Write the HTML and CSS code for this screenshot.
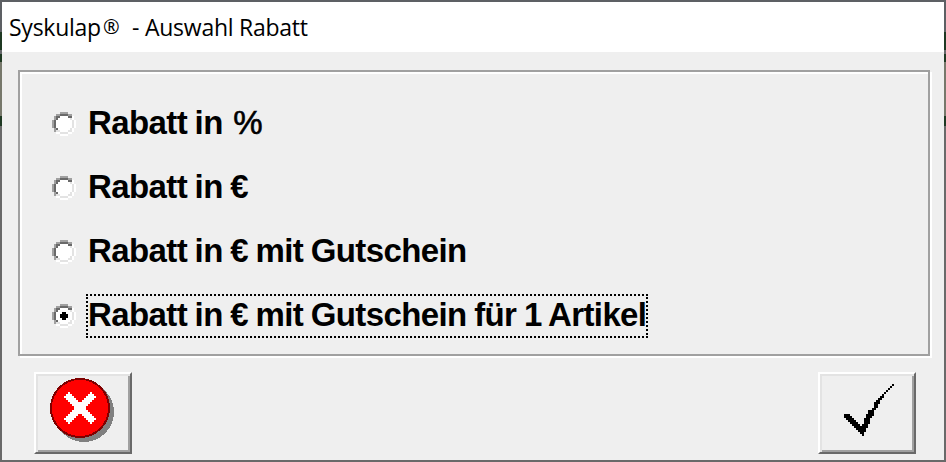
FILE: index.html
```html
<!DOCTYPE html>
<html lang="de">
<head>
    <meta charset="UTF-8">
    <meta name="viewport" content="width=device-width, initial-scale=1.0">
    <title>Syskulap® - Auswahl Rabatt</title>
    <link rel="stylesheet" href="styles.css">
</head>
<body>
    <svg width="0" height="0" class="defs">
        <symbol id="radio" viewBox="0 0 12 12">
            <path fill="#fff" d="M4 2h4v1h1v1h1v4h-1v1h-1v1h-4v-1h-1v-1h-1v-4h1v-1h1zM10 2h1v2h-1zM11 4h1v4h-1zM10 8h1v2h-1zM8 10h2v1h-2zM2 10h2v1h-2zM4 11h4v1h-4z"/>
            <path fill="#a0a0a0" d="M4 0h4v1h-4zM2 1h2v1h-2zM8 1h2v1h-2zM1 2h1v2h-1zM0 4h1v4h-1zM1 8h1v2h-1z"/>
            <path fill="#696969" d="M4 1h4v1h-4zM2 2h2v1h-2zM8 2h2v1h-2zM2 3h1v1h-1zM1 4h1v4h-1zM2 8h1v1h-1z"/>
            <path fill="#e3e3e3" d="M9 3h1v1h-1zM10 4h1v4h-1zM9 8h1v1h-1zM8 9h2v1h-2zM4 10h4v1h-4zM2 9h2v1h-2z"/>
        </symbol>
    </svg>
    <div class="window">
        <div class="title-bar">Syskulap<span class="reg">®</span> - Auswahl Rabatt</div>
        <div class="content">
            <div class="group">
                <div class="option">
                    <svg class="radio" width="24" height="24"><use href="#radio"/></svg>
                    <span class="label">Rabatt in <span class="percent">%</span></span>
                </div>
                <div class="option">
                    <svg class="radio" width="24" height="24"><use href="#radio"/></svg>
                    <span class="label">Rabatt in €</span>
                </div>
                <div class="option">
                    <svg class="radio" width="24" height="24"><use href="#radio"/></svg>
                    <span class="label">Rabatt in € mit Gutschein</span>
                </div>
                <div class="option">
                    <svg class="radio" width="24" height="24" viewBox="0 0 12 12"><use href="#radio"/><path d="M5 4h2v1h1v2h-1v1h-2v-1h-1v-2h1z"/></svg>
                    <span class="label focused">Rabatt in € mit Gutschein für 1 Artikel</span>
                </div>
            </div>
            <div class="buttons">
                <button class="button cancel" aria-label="Abbrechen">
                    <svg width="64" height="64" viewBox="0 0 32 32">
                        <circle cx="17" cy="17" r="15" fill="#808080"/>
                        <circle cx="15" cy="15" r="14.5" fill="#f00" stroke="#800000"/>
                        <path fill="#fff" d="M9 7h1v1h1v1h1v1h1v1h1v1h2v-1h1v-1h1v-1h1v-1h1v-1h1v1h1v1h1v1h-1v1h-1v1h-1v1h-1v1h-1v2h1v1h1v1h1v1h1v1h1v1h-1v1h-1v1h-1v-1h-1v-1h-1v-1h-1v-1h-1v-1h-2v1h-1v1h-1v1h-1v1h-1v1h-1v-1h-1v-1h-1v-1h1v-1h1v-1h1v-1h1v-1h1v-2h-1v-1h-1v-1h-1v-1h-1v-1h-1v-1h1v-1h1z"/>
                    </svg>
                </button>
                <button class="button ok" aria-label="OK">
                    <svg width="50" height="52" viewBox="0 0 25 26">
                        <path d="M24 0h1v1h-1zM23 1h1v1h-1zM22 2h1v1h-1zM21 3h1v1h-1zM20 4h1v1h-1zM19 5h1v1h-1zM18 6h2v1h-2zM17 7h2v1h-2zM16 8h2v1h-2zM15 9h3v1h-3zM15 10h2v2h-2zM14 12h2v1h-2zM12 13h3v2h-3zM0 15h3v1h-3zM11 15h4v1h-4zM0 16h4v1h-4zM11 16h3v1h-3zM1 17h4v1h-4zM10 17h3v1h-3zM2 18h4v1h-4zM10 18h3v1h-3zM3 19h4v1h-4zM10 19h3v1h-3zM4 20h4v1h-4zM9 20h3v1h-3zM5 21h7v1h-7zM6 22h5v1h-5zM7 23h4v1h-4zM8 24h2v1h-2zM9 25h1v1h-1z"/>
                    </svg>
                </button>
            </div>
        </div>
    </div>
</body>
</html>
```

FILE: styles.css
```css
* {
    box-sizing: border-box;
}
body {
    margin: 0;
    height: 462px;
    overflow: hidden;
    background: linear-gradient(#5d6064 32px, #1f3923 32px 50px, #66686b 50px 54px, #1f3923 54px 62px, #77786b 62px 116px, #1f3923 116px 126px, #696969 126px);
    font-family: "Liberation Sans", Arial, sans-serif;
    color: #000;
}
.defs {
    display: none;
}
.window {
    height: 462px;
    border: 2px solid transparent;
    background-color: #efefef;
    background-clip: padding-box;
}
.title-bar {
    height: 50px;
    padding-left: 7px;
    background-color: #fff;
    font-family: "Open Sans", "Noto Sans", sans-serif;
    font-size: 23px;
    line-height: 50px;
    letter-spacing: -0.25px;
    white-space: pre;
}
.reg {
    margin: 0 7px 0 2px;
    font-size: 20px;
    line-height: 1;
    vertical-align: 2px;
}
.content {
    padding: 18px 14px 0 16px;
}
.group {
    height: 286px;
    padding: 19px 0 0 30px;
    border: 2px solid #a0a0a0;
    box-shadow: inset 2px 2px #fff, 2px 2px #fff;
}
.option {
    display: flex;
    align-items: center;
    height: 64px;
}
.radio {
    margin: 2px 10px 0 2px;
    shape-rendering: crispEdges;
}
.label {
    height: 44px;
    margin-top: 2px;
    border: 2px solid transparent;
    font-size: 33px;
    font-weight: bold;
    line-height: 38px;
    letter-spacing: -0.61px;
    word-spacing: -1px;
    white-space: pre;
}
.focused {
    border: 2px dotted #000;
}
.percent {
    margin-left: 3px;
    font-weight: normal;
    -webkit-text-stroke: 0.6px #000;
}
.buttons {
    display: flex;
    justify-content: space-between;
    padding: 16px 14px 0 16px;
}
.button {
    width: 98px;
    height: 82px;
    padding: 0;
    border: 2px solid;
    border-color: #fff #696969 #696969 #fff;
    background-color: #efefef;
    box-shadow: inset 2px 2px #e3e3e3, inset -2px -2px #a0a0a0;
    display: flex;
}
.button svg {
    shape-rendering: crispEdges;
}
.cancel svg {
    margin: 4px 0 0 14px;
}
.ok svg {
    margin: 10px 0 0 24px;
}
```
